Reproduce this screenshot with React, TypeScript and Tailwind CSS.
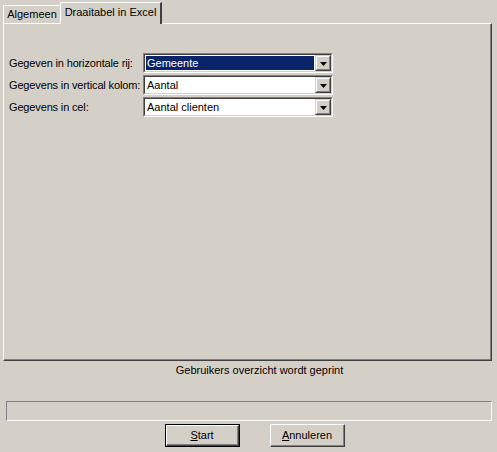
import React from "react";

const rows = [
	{ label: "Gegeven in horizontale rij:", value: "Gemeente", selected: true },
	{ label: "Gegevens in vertical kolom:", value: "Aantal", selected: false },
	{ label: "Gegevens in cel:", value: "Aantal clienten", selected: false },
];

function ComboBox({ value, selected }: { value: string; selected: boolean }) {
	// sunken 2px edit border, raised dropdown button at the right
	return (
		<div className="shrink-0 w-[190px] h-[20px] border-t border-l border-[#808080] border-r border-b border-r-white border-b-white">
			<div className="flex h-full border-t border-l border-[#404040] border-r border-b border-r-[#d4d0c8] border-b-[#d4d0c8] bg-white">
				<div className="flex-1 flex items-center pl-px pr-px">
					<span
						className={
							selected
								? "w-full h-[14px] leading-[14px] bg-[#0a246a] text-white pl-px"
								: "w-full h-[14px] leading-[14px] text-black pl-px"
						}>
						{value}
					</span>
				</div>
				<div className="w-[16px] h-[16px] bg-[#d4d0c8] border-t border-l border-[#d4d0c8] border-r border-b border-r-[#404040] border-b-[#404040]">
					<div className="w-full h-full flex items-center justify-center border-t border-l border-white border-r border-b border-r-[#808080] border-b-[#808080]">
						<svg width="7" height="4" viewBox="0 0 7 4" className="mt-px">
							<path d="M0 0h7L3.5 4z" fill="#000" />
						</svg>
					</div>
				</div>
			</div>
		</div>
	);
}

function WinButton({
	label,
	mnemonic,
	isDefault,
}: {
	label: string;
	mnemonic: string;
	isDefault?: boolean;
}) {
	const rest = label.slice(mnemonic.length);
	const inner = (
		<div className="w-full h-full border-t border-l border-white border-r border-b border-r-[#404040] border-b-[#404040]">
			<div className="w-full h-full flex items-center justify-center border-r border-b border-r-[#808080] border-b-[#808080]">
				<span>
					<span className="underline underline-offset-1">{mnemonic}</span>
					{rest}
				</span>
			</div>
		</div>
	);
	return (
		<div
			className={
				isDefault
					? "w-[75px] h-[23px] border border-black"
					: "w-[75px] h-[23px]"
			}>
			{inner}
		</div>
	);
}

export default function App() {
	return (
		<div
			className="w-[497px] h-[452px] bg-[#d4d0c8] text-black text-[11px] flex flex-col"
			style={{ fontFamily: '"Liberation Sans", Arial, sans-serif' }}>
			{/* Tab strip */}
			<div className="flex items-end h-[23px] pl-[3px] pt-[2px]">
				<div className="shrink-0 whitespace-nowrap h-[18px] w-[58px] flex items-center justify-center border-t border-l border-white border-r border-r-[#808080] rounded-tl-[2px]">
					Algemeen
				</div>
				<div className="shrink-0 whitespace-nowrap relative top-px z-10 h-[22px] w-[102px] pb-[3px] flex items-center justify-center bg-[#d4d0c8] border-t border-l border-white border-r-2 border-r-[#404040] rounded-tl-[2px] -ml-px">
					Draaitabel in Excel
				</div>
			</div>

			{/* Tab panel */}
			<div className="ml-[3px] mr-[5px] h-[338px] border-t border-l border-white border-r border-b border-r-[#404040] border-b-[#404040]">
				<div className="w-full h-full border-r border-b border-r-[#808080] border-b-[#808080] pt-[29px] pl-[5px]">
					<div className="flex flex-col gap-[2px]">
						{rows.map((r) => (
							<div key={r.label} className="flex items-center h-[20px]">
								<div className="w-[134px] shrink-0 whitespace-nowrap tracking-[-0.15px]">
									{r.label}
								</div>
								<ComboBox value={r.value} selected={r.selected} />
							</div>
						))}
					</div>
				</div>
			</div>

			{/* Status text */}
			<div className="h-[18px] flex items-center justify-center pl-[22px]">
				Gebruikers overzicht wordt geprint
			</div>

			{/* Progress bar */}
			<div className="mt-[22px] ml-[6px] mr-[5px] h-[20px] border-t border-l border-[#808080] border-r border-b border-r-white border-b-white" />

			{/* Buttons */}
			<div className="flex gap-[30px] pl-[165px] mt-[3px]">
				<WinButton label="Start" mnemonic="S" isDefault />
				<WinButton label="Annuleren" mnemonic="A" />
			</div>
		</div>
	);
}
